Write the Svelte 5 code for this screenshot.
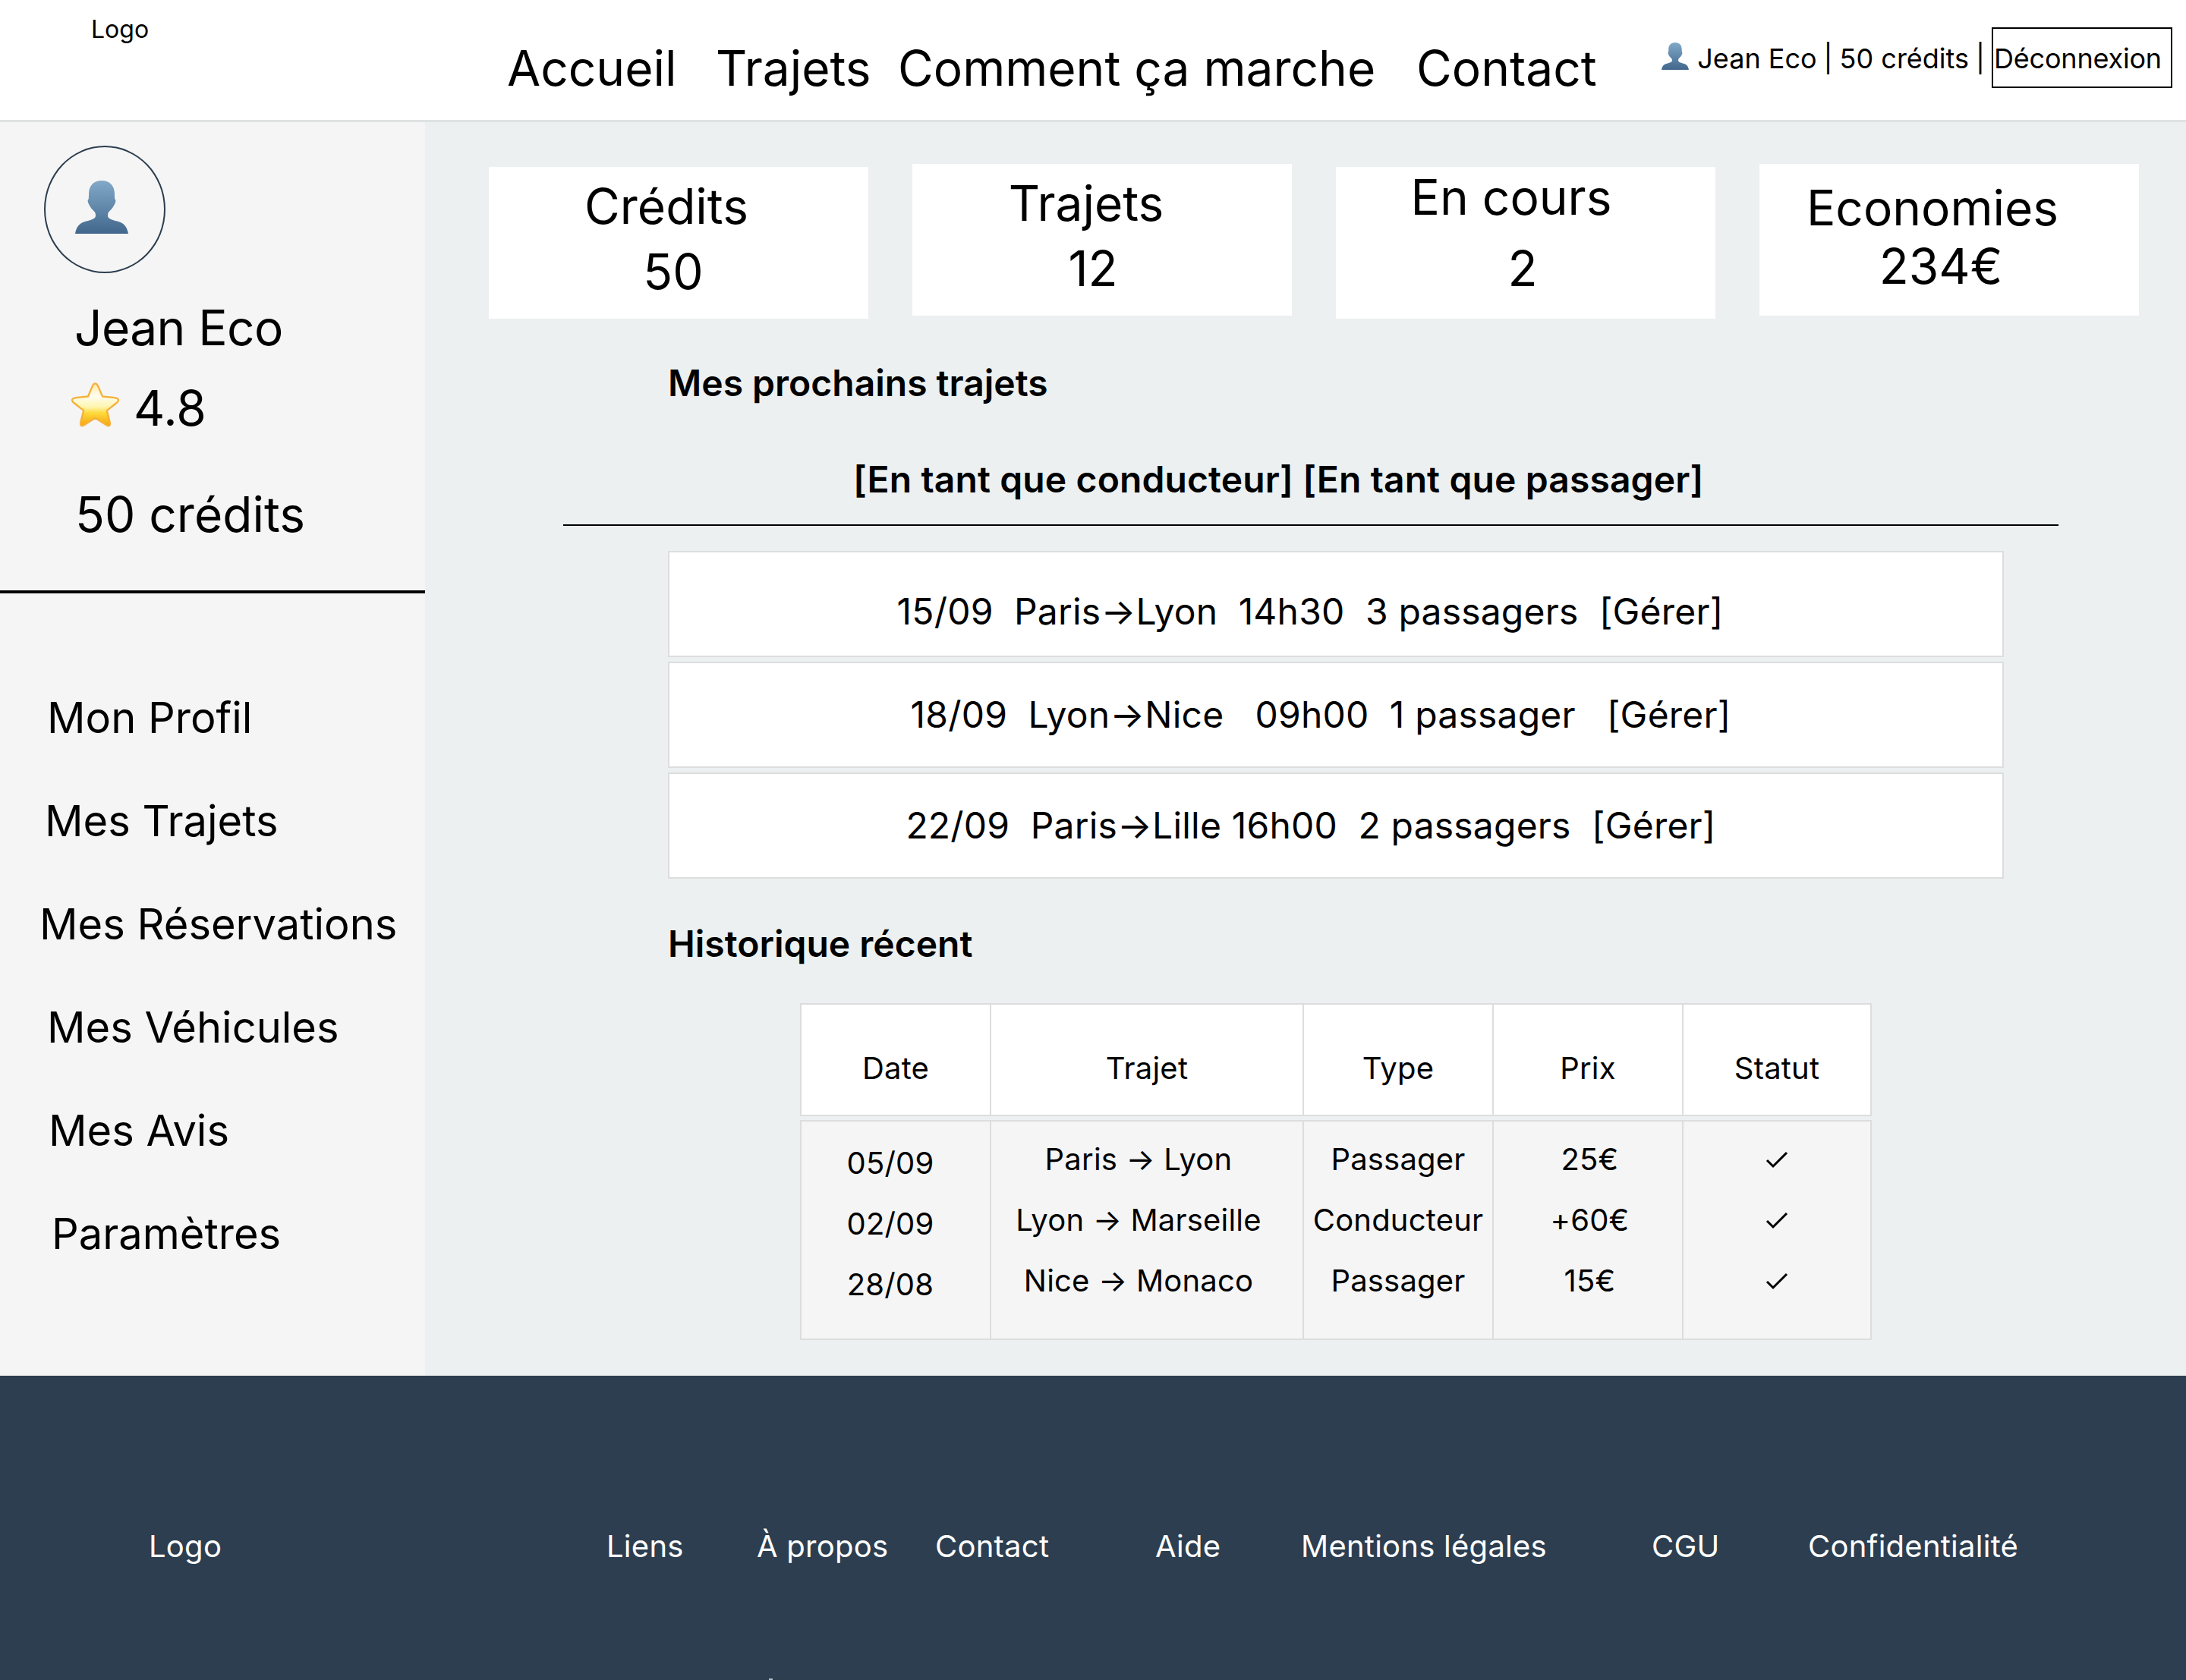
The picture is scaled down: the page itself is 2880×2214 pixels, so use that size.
<script>
    const navLinks = ['Accueil', 'Trajets', 'Comment ça marche', 'Contact'];

    // the labels in the mockup are not quite centred, hence the nudges
    const stats = [
        { label: 'Crédits', value: '50', labelTop: 16, valueTop: 14, labelNudge: 32, valueNudge: 14 },
        { label: 'Trajets', value: '12', labelTop: 16, valueTop: 14, labelNudge: 42, valueNudge: 24 },
        { label: 'En cours', value: '2', labelTop: 4, valueTop: 22, labelNudge: 38, valueNudge: 8 },
        { label: 'Economies', value: '234€', labelTop: 22, valueTop: 5, labelNudge: 44, valueNudge: 22 }
    ];

    const trips = [
        { text: '15/09  Paris→Lyon  14h30  3 passagers  [Gérer]', nudge: 68, lower: 20 },
        { text: '18/09  Lyon→Nice   09h00  1 passager   [Gérer]', nudge: 40, lower: 0 },
        { text: '22/09  Paris→Lille 16h00  2 passagers  [Gérer]', nudge: 66, lower: 0 }
    ];

    const menu = [
        { label: 'Mon Profil', indent: 62 },
        { label: 'Mes Trajets', indent: 59 },
        { label: 'Mes Réservations', indent: 52 },
        { label: 'Mes Véhicules', indent: 62 },
        { label: 'Mes Avis', indent: 64 },
        { label: 'Paramètres', indent: 68 }
    ];

    const columns = ['Date', 'Trajet', 'Type', 'Prix', 'Statut'];
    const dates = ['05/09', '02/09', '28/08'];
    const routes = ['Paris → Lyon', 'Lyon → Marseille', 'Nice → Monaco'];
    const types = ['Passager', 'Conducteur', 'Passager'];
    const prices = ['25€', '+60€', '15€'];

    const footerLinks = ['Liens', 'À propos', 'Contact', 'Aide', 'Mentions légales', 'CGU', 'Confidentialité'];
</script>

<svg class="defs" width="0" height="0" aria-hidden="true">
    <defs>
        <linearGradient id="bust" x1="0" y1="0" x2="0" y2="1">
            <stop offset="0" stop-color="#82a9c8" />
            <stop offset="1" stop-color="#41678c" />
        </linearGradient>
        <linearGradient id="starFill" x1="0" y1="0" x2="0" y2="1">
            <stop offset="0" stop-color="#ffe9a0" />
            <stop offset="0.3" stop-color="#fffdf0" />
            <stop offset="0.55" stop-color="#fff6b0" />
            <stop offset="0.7" stop-color="#ffd93a" />
            <stop offset="1" stop-color="#f5a30f" />
        </linearGradient>
        <symbol id="person" viewBox="0 0 70 70">
            <path fill="url(#bust)" d="M35 0C24 0 18 7 18 18C18 21 18 22 17.700 24.500C16.300 25 16.300 28 17.500 30C19 33 21 37 25.500 41C26.500 42 27 44 27 46C27 49.500 24 51 17 53C8 55 2 58 0 70H70C68 58 62 55 53 53C46 51 43 49.500 43 46C43 44 43.500 42 44.500 41C49 37 51 33 52.500 30C53.700 28 53.700 25 52.300 24.500C52 22 52 21 52 18C52 7 46 0 35 0Z" />
        </symbol>
    </defs>
</svg>

<div class="page">
    <header class="topbar">
        <div class="logo">Logo</div>
        <nav class="nav">
            {#each navLinks as link}
                <a href="#top">{link}</a>
            {/each}
        </nav>
        <div class="account">
            <svg class="account-icon"><use href="#person" /></svg>
            <span>Jean Eco</span>
            <span class="sep">|</span>
            <span>50 crédits</span>
            <span class="sep">|</span>
            <button class="logout">Déconnexion</button>
        </div>
    </header>

    <div class="middle">
        <aside class="sidebar">
            <div class="profile">
                <div class="avatar">
                    <svg class="avatar-icon"><use href="#person" /></svg>
                </div>
                <div class="name">Jean Eco</div>
                <div class="rating">
                    <svg class="star" viewBox="0 0 66 62">
                        <path fill="url(#starFill)" stroke="#f5b13d" stroke-width="2.500" stroke-linejoin="round" d="M33 2C35 2 36 4 37 6L43 20L58 21.500C62 22 65 23 65 25C65 27 63 28.500 61 30L49 39.500L53 55C53.500 57.500 54 60 52 60.500C50.500 61 48.500 59.500 46 58L33 49.500L20 58C17.500 59.500 15.500 61 14 60.500C12 60 12.500 57.500 13 55L17 39.500L5 30C3 28.500 1 27 1 25C1 23 4 22 8 21.500L23 20L29 6C30 4 31 2 33 2Z" />
                    </svg>
                    <span>4.8</span>
                </div>
                <div class="credits">50 crédits</div>
            </div>
            <ul class="menu">
                {#each menu as item}
                    <li style:padding-left="{item.indent}px">{item.label}</li>
                {/each}
            </ul>
        </aside>

        <main class="content">
            <section class="stats">
                {#each stats as stat, i}
                    <div class="stat" class:raised={i % 2 === 1}>
                        <div style:padding-top="{stat.labelTop}px" style:padding-right="{stat.labelNudge}px">{stat.label}</div>
                        <div style:padding-top="{stat.valueTop}px" style:padding-right="{stat.valueNudge}px">{stat.value}</div>
                    </div>
                {/each}
            </section>

            <h2 class="next-title">Mes prochains trajets</h2>
            <div class="tabs">[En tant que conducteur] [En tant que passager]</div>
            <div class="rule"></div>

            <div class="trips">
                {#each trips as trip}
                    <div class="trip" style:padding-right="{trip.nudge}px" style:padding-top="{trip.lower}px">
                        <span>{trip.text}</span>
                    </div>
                {/each}
            </div>

            <h2 class="history-title">Historique récent</h2>

            <div class="history">
                <div class="row head">
                    {#each columns as col}
                        <div class="cell">{col}</div>
                    {/each}
                </div>
                <div class="row body">
                    <div class="cell dates">
                        {#each dates as d}<div>{d}</div>{/each}
                    </div>
                    <div class="cell routes">
                        {#each routes as r}<div>{r}</div>{/each}
                    </div>
                    <div class="cell">
                        {#each types as t}<div>{t}</div>{/each}
                    </div>
                    <div class="cell prices">
                        {#each prices as p}<div>{p}</div>{/each}
                    </div>
                    <div class="cell">
                        {#each dates as d}
                            <div class="check-line">
                                <svg class="check" viewBox="0 0 30 24"><path d="M2 13L10 21L28 3" /></svg>
                            </div>
                        {/each}
                    </div>
                </div>
            </div>
        </main>
    </div>

    <footer class="footer">
        <div>Logo</div>
        {#each footerLinks as link}
            <a href="#top">{link}</a>
        {/each}
        <span class="speck"></span>
    </footer>
</div>

<style>
    :global(body) {
        margin: 0;
        background: #fff;
    }
    .defs {
        position: absolute;
    }
    .page {
        width: 2880px;
        height: 2214px;
        display: flex;
        flex-direction: column;
        overflow: hidden;
        font-family: Inter, "Liberation Sans", sans-serif;
        color: #000;
    }
    a {
        color: inherit;
        text-decoration: none;
    }

    /* top bar */
    .topbar {
        height: 161px;
        box-sizing: border-box;
        flex: none;
        display: flex;
        align-items: flex-start;
        background: #fff;
        border-bottom: 3px solid #dfe2e3;
    }
    .logo {
        width: 668px;
        box-sizing: border-box;
        padding: 20px 0 0 120px;
        font-size: 32px;
        line-height: 38px;
    }
    .nav {
        display: grid;
        grid-template-columns: 275px 240px 683px auto;
        padding-top: 50px;
        font-size: 64px;
        line-height: 80px;
        white-space: nowrap;
    }
    .account {
        margin-left: auto;
        margin-right: 18px;
        margin-top: 36px;
        display: flex;
        align-items: center;
        font-size: 36px;
        height: 80px;
        white-space: nowrap;
    }
    .account span {
        padding-top: 2px;
    }
    .account-icon {
        width: 36px;
        height: 36px;
        margin-right: 11px;
        margin-bottom: 4px;
    }
    .sep {
        margin: 0 9px;
    }
    .logout {
        box-sizing: border-box;
        width: 238px;
        height: 80px;
        padding: 2px 0 0 1px;
        text-align: left;
        border: 2px solid #000;
        background: #fff;
        font: inherit;
        letter-spacing: -0.2px;
        color: #000;
    }

    /* sidebar */
    .middle {
        flex: 1;
        display: flex;
        min-height: 0;
    }
    .sidebar {
        width: 560px;
        flex: none;
        background: #f5f5f5;
    }
    .profile {
        height: 621px;
        box-sizing: border-box;
        padding: 31px 0 0 99px;
        border-bottom: 4px solid #000;
        font-size: 64px;
    }
    .avatar {
        margin-left: -41px;
        box-sizing: border-box;
        width: 160px;
        height: 168px;
        border: 2px solid #2c3e50;
        border-radius: 50%;
        display: flex;
        align-items: center;
        justify-content: center;
    }
    .avatar-icon {
        width: 70px;
        height: 70px;
        margin-right: 8px;
        margin-bottom: 6px;
    }
    .name {
        margin: 32px 0 0 -1px;
        line-height: 80px;
        letter-spacing: -0.6px;
    }
    .rating {
        margin-top: 26px;
        margin-left: -5px;
        display: flex;
        align-items: center;
        gap: 19px;
        line-height: 80px;
    }
    .star {
        width: 63px;
        height: 60px;
        flex: none;
        margin-bottom: 10px;
    }
    .credits {
        margin-top: 60px;
        line-height: 80px;
    }
    .menu {
        list-style: none;
        margin: 96px 0 0;
        padding: 0;
        font-size: 56px;
        line-height: 136px;
    }

    /* main column */
    .content {
        flex: 1;
        min-width: 0;
        background: #ecf0f1;
    }
    .stats {
        height: 200px;
        padding: 59px 0 0 84px;
        display: flex;
        align-items: flex-start;
        gap: 58px;
        font-size: 64px;
        line-height: 72px;
    }
    .stat {
        width: 500px;
        height: 200px;
        box-sizing: border-box;
        background: #fff;
        text-align: center;
    }
    .stat.raised {
        margin-top: -4px;
    }
    h2 {
        margin: 0;
        font-size: 48px;
        font-weight: 600;
        line-height: 60px;
    }
    .next-title {
        margin: 55px 0 0 320px;
    }
    .tabs {
        margin: 67px 0 0 564px;
        font-size: 48px;
        font-weight: 600;
        line-height: 60px;
        letter-spacing: 0.12px;
    }
    .rule {
        margin: 29px 0 0 182px;
        width: 1970px;
        height: 2px;
        background: #000;
    }
    .trips {
        margin: 33px 0 0 320px;
        width: 1760px;
        display: flex;
        flex-direction: column;
        gap: 6px;
    }
    .trip {
        height: 140px;
        box-sizing: border-box;
        background: #fff;
        border: 2px solid #ddd;
        display: flex;
        align-items: center;
        justify-content: center;
        font-size: 48px;
        letter-spacing: 0.2px;
        white-space: pre;
    }
    .trip span {
        margin-top: -2px;
    }
    .history-title {
        margin: 56px 0 0 320px;
    }

    /* history table */
    .history {
        margin: 48px 0 0 494px;
        width: 1410px;
        font-size: 40px;
        letter-spacing: 0.2px;
    }
    .row {
        display: grid;
        grid-template-columns: 250px 412px 250px 250px 248px;
    }
    .cell {
        box-sizing: border-box;
        margin-right: -2px;
        border: 2px solid #ddd;
        text-align: center;
    }
    .head {
        height: 149px;
        background: #fff;
    }
    .head .cell {
        padding-top: 22px;
        display: flex;
        align-items: center;
        justify-content: center;
    }
    .body {
        margin-top: 5px;
        height: 290px;
        background: #f5f5f5;
    }
    .body .cell {
        padding-top: 10px;
        line-height: 80px;
    }
    .body .cell.dates {
        padding-top: 15px;
        padding-right: 14px;
    }
    .body .cell.routes {
        padding-right: 22px;
    }
    .body .cell.prices {
        padding-left: 5px;
    }
    .check-line {
        height: 80px;
        display: flex;
        align-items: center;
        justify-content: center;
    }
    .check {
        width: 30px;
        height: 24px;
        fill: none;
        stroke: #000;
        stroke-width: 3;
    }

    /* footer */
    .footer {
        position: relative;
        height: 401px;
        flex: none;
        box-sizing: border-box;
        padding: 48px 0 0 196px;
        display: grid;
        grid-template-columns: 603px 198px 235px 290px 192px 462px 206px 1fr;
        align-items: center;
        background: #2c3e50;
        color: #fff;
        font-size: 40px;
        letter-spacing: 0.25px;
    }
    /* clipped tip of something below the fold in the mockup */
    .speck {
        position: absolute;
        left: 1013px;
        bottom: 0;
        width: 5px;
        height: 2px;
        background: #b9c0c7;
    }
</style>
